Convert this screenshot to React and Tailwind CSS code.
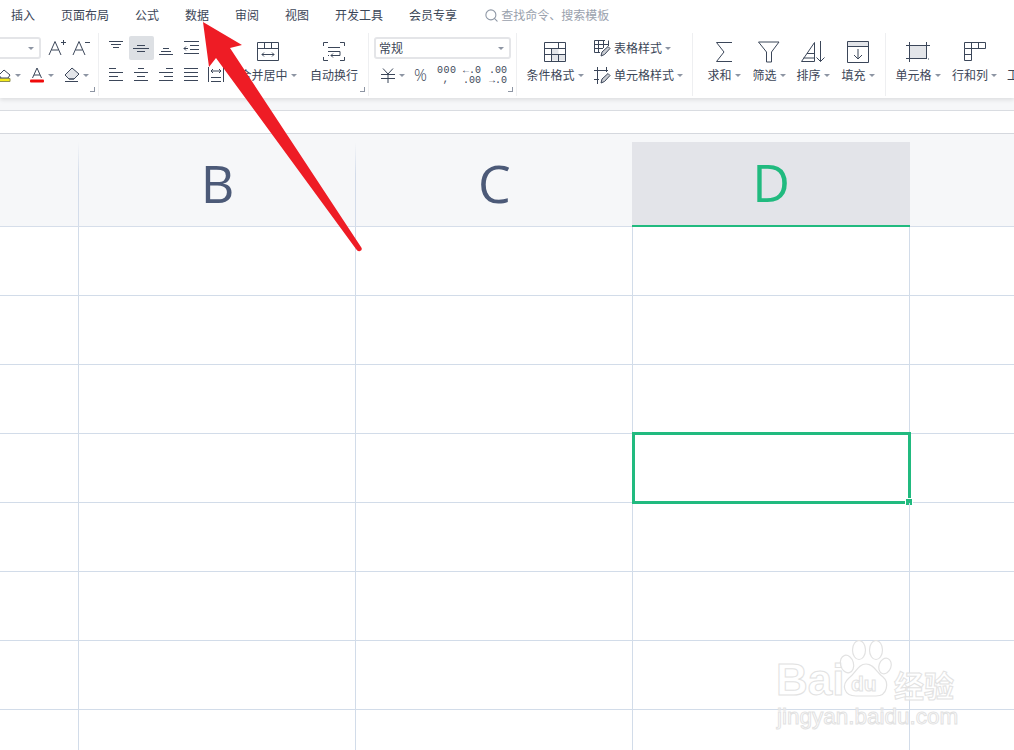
import React from 'react';
import { Search } from 'lucide-react';

const menus = ['插入', '页面布局', '公式', '数据', '审阅', '视图', '开发工具', '会员专享'];

// small dropdown caret used all over the ribbon
function Dd({ className = '' }) {
    return <span className={`inline-block w-0 h-0 shrink-0 border-x-[3px] border-t-[3px] border-x-transparent border-t-[#8d95a3] ${className}`} />;
}

function Ic({ w = 16, h = 20, children }) {
    return (
        <svg width={w} height={h} viewBox={`0 0 ${w} ${h}`} fill="none" stroke="#3b4659" strokeWidth="1" className="shrink-0">
            {children}
        </svg>
    );
}

function Lines({ rows }) {
    return (
        <Ic>
            {rows.map(([a, b, y], i) => (
                <path key={i} d={`M${a} ${y}H${b}`} />
            ))}
        </Ic>
    );
}

function Corner() {
    return <span className="absolute right-[3px] bottom-[4px] w-[5px] h-[5px] border-r border-b border-[#8d95a3]" />;
}

function Cell({ active, children }) {
    return (
        <div className={`w-[25px] h-[24px] flex items-center justify-start pl-[4px] rounded-[2px] ${active ? 'bg-[#dde0e4]' : ''}`}>
            {children}
        </div>
    );
}

function BigBtn({ className, label, icon }) {
    return (
        <div className={`flex flex-col items-center shrink-0 ${className}`}>
            <div className="h-[24px] mt-[7px] flex items-center justify-center">{icon}</div>
            <div className="h-[22px] flex items-center whitespace-nowrap">
                {label.text}
                {label.dd && <Dd className="ml-[3px]" />}
            </div>
        </div>
    );
}

function Group({ className, children }) {
    return <div className={`relative h-[63px] my-[3px] shrink-0 border-r border-[#eeeff1] ${className}`}>{children}</div>;
}

function FontGroup() {
    return (
        <Group className="w-[99px] pt-[4px]">
            <div className="flex items-center h-[22px]">
                <div className="w-[45px] -ml-[4px] h-[22px] border-2 border-[#e4e5e8] rounded-[3px] flex items-center justify-end pr-[5px]">
                    <Dd />
                </div>
                <div className="ml-[7px]">
                    <Ic w={18} h={20}>
                        <path d="M1 17L7 3.5L13 17M3.5 12H10.5" />
                        <path d="M13 4.5H18M15.5 2V7" />
                    </Ic>
                </div>
                <div className="ml-[6px]">
                    <Ic w={18} h={20}>
                        <path d="M1 17L7 3.5L13 17M3.5 12H10.5" />
                        <path d="M13 4.5H18" />
                    </Ic>
                </div>
            </div>
            <div className="flex items-center h-[22px] mt-[5px]">
                <div className="-ml-[2px]">
                    <svg width="14" height="16" viewBox="0 0 14 16" fill="none" stroke="#3b4659" strokeWidth="1">
                        <path d="M1 8L6 3L12 8L10 11H3Z" />
                        <path d="M0 11.5H12V14.5H0Z" fill="#f4ea1a" stroke="#8f8f50" />
                    </svg>
                </div>
                <Dd className="ml-[3px]" />
                <div className="ml-[9px] flex flex-col items-center w-[14px]">
                    <svg width="14" height="16" viewBox="0 0 14 16" fill="none" stroke="#3b4659" strokeWidth="1">
                        <path d="M2.5 11L7 1L11.5 11M4 8H10" />
                        <rect x="0" y="12.5" width="14" height="3" rx="1" fill="#f00a0a" stroke="none" />
                    </svg>
                </div>
                <Dd className="ml-[4px]" />
                <div className="ml-[9px]">
                    <svg width="17" height="16" viewBox="0 0 17 16" fill="none" stroke="#3b4659" strokeWidth="1">
                        <path d="M9 1L16 7L11 12H6L2 8Z" fill="#e3e5e9" />
                        <path d="M2 8L6 12H11" fill="none" />
                        <path d="M2 14.5H15" />
                    </svg>
                </div>
                <Dd className="ml-[3px]" />
            </div>
            <Corner />
        </Group>
    );
}

function AlignGroup() {
    return (
        <Group className="w-[270px] flex">
            <div className="ml-[5px] w-[125px] pt-[3px]">
                <div className="flex">
                    <Cell><Lines rows={[[1, 15, 3.5], [3, 13, 6.5], [5, 11, 9.5]]} /></Cell>
                    <Cell active><Lines rows={[[4, 12, 7.5], [0, 16, 10.5], [4, 12, 13.5]]} /></Cell>
                    <Cell><Lines rows={[[5, 11, 10.5], [3, 13, 13.5], [1, 15, 16.5]]} /></Cell>
                    <Cell>
                        <Ic>
                            <path d="M1 3.5H16M7 7.5H16M7 11.5H16M1 15.5H16" />
                            <path d="M5 10.5H1M3 8.5L1 10.5L3 12.5" />
                        </Ic>
                    </Cell>
                </div>
                <div className="flex mt-[3px]">
                    <Cell><Lines rows={[[1, 8, 3.5], [1, 15, 7.5], [1, 10, 11.5], [1, 15, 15.5]]} /></Cell>
                    <Cell><Lines rows={[[5, 11, 3.5], [1, 15, 7.5], [4, 12, 11.5], [1, 15, 15.5]]} /></Cell>
                    <Cell><Lines rows={[[8, 15, 3.5], [1, 15, 7.5], [6, 15, 11.5], [1, 15, 15.5]]} /></Cell>
                    <Cell><Lines rows={[[1, 15, 3.5], [1, 15, 7.5], [1, 15, 11.5], [1, 15, 15.5]]} /></Cell>
                    <Cell>
                        <Ic>
                            <path d="M0.5 2V17M15.5 2V17M3 12.5H13M3 16.5H13" />
                            <path d="M3 6H13M5 4L3 6L5 8M11 4L13 6L11 8" />
                        </Ic>
                    </Cell>
                </div>
            </div>
            <BigBtn
                className="ml-[4px] w-[70px]"
                label={{ text: '合并居中', dd: true }}
                icon={
                    <Ic w={22} h={20}>
                        <path d="M0.5 0.5H21.5V18.5H0.5ZM0.5 6.5H21.5M7.5 0.5V6.5M14.5 0.5V6.5" />
                        <path d="M5 12.5H17M7 10.5L5 12.5L7 14.5M15 10.5L17 12.5L15 14.5" />
                    </Ic>
                }
            />
            <BigBtn
                className="w-[62px]"
                label={{ text: '自动换行' }}
                icon={
                    <Ic w={22} h={20}>
                        <path d="M5 0.5H0.5V4M17 0.5H21.5V4M5 18.5H0.5V15M17 18.5H21.5V15" />
                        <path d="M5 5.5H17M5 9.5H17V13.5H8M10 11.5L8 13.5L10 15.5M5 13.5H6" />
                    </Ic>
                }
            />
            <Corner />
        </Group>
    );
}

function NumberGroup() {
    return (
        <Group className="w-[148px] pt-[4px] pl-[5px]">
            <div className="w-[137px] h-[22px] border-2 border-[#e4e5e8] rounded-[3px] flex items-center justify-between pl-[3px] pr-[5px] leading-none">
                常规
                <Dd />
            </div>
            <div className="flex items-center h-[22px] mt-[5px] pl-[7px]">
                <Ic w={14} h={16}>
                    <path d="M2 1.5L7 7L12 1.5M0 7.5H14M0 11.5H14M7 7V16" />
                </Ic>
                <Dd className="ml-[4px]" />
                <span className="ml-[9px] w-[15px] text-[16px] leading-none font-light font-['Open_Sans',sans-serif]">%</span>
                <div className="ml-[8px] mt-px w-[18px] text-[10px] leading-[10px] text-center tracking-[0.5px] font-['Liberation_Mono',monospace]">
                    <div>000</div>
                    <div className="-mt-[1px]">,</div>
                </div>
                <div className="ml-[6px] mt-px w-[20px] text-[10px] leading-[10px] text-right font-['Liberation_Mono',monospace]">
                    <div>←.0</div>
                    <div>.00</div>
                </div>
                <div className="ml-[6px] mt-px w-[20px] text-[10px] leading-[10px] text-right font-['Liberation_Mono',monospace]">
                    <div>.00</div>
                    <div>→.0</div>
                </div>
            </div>
            <Corner />
        </Group>
    );
}

function StyleGroup() {
    return (
        <Group className="w-[176px] flex">
            <BigBtn
                className="ml-[9px] w-[58px]"
                label={{ text: '条件格式', dd: true }}
                icon={
                    <Ic w={22} h={20}>
                        <path d="M7.5 6.5H14.5V12.5H21.5V18.5H7.5Z" fill="#e3e5e9" stroke="none" />
                        <path d="M0.5 0.5H21.5V19.5H0.5ZM0.5 6.5H21.5M0.5 12.5H21.5M7.5 6.5V12.5M14.5 0.5V6.5M14.5 12.5V19.5M7.5 12.5V19.5" />
                    </Ic>
                }
            />
            <div className="ml-[10px] pt-[4px]">
                <div className="flex items-center h-[22px] whitespace-nowrap">
                    <Ic w={17} h={17}>
                        <path d="M11 0.5H0.5V12.5H6M0.5 4.5H14.5M0.5 8.5H9M4.5 0.5V12.5M9.5 0.5V8M14.5 0.5V6" />
                        <path d="M7 16L8 12L14 6.5L16 8.5L10.5 14.5Z" fill="#c9ccd2" />
                    </Ic>
                    <span className="ml-[3px]">表格样式</span>
                    <Dd className="ml-[3px]" />
                </div>
                <div className="flex items-center h-[22px] mt-[5px] whitespace-nowrap">
                    <Ic w={17} h={17}>
                        <path d="M0 3.5H14M0 12.5H5M3.5 0V17M12.5 0V5" />
                        <path d="M7 16L8 12L14 6.5L16 8.5L10.5 14.5Z" fill="#c9ccd2" />
                    </Ic>
                    <span className="ml-[3px]">单元格样式</span>
                    <Dd className="ml-[3px]" />
                </div>
            </div>
        </Group>
    );
}

function EditGroup() {
    return (
        <Group className="w-[193px] flex">
            <BigBtn
                className="ml-[15px] w-[32px]"
                label={{ text: '求和', dd: true }}
                icon={
                    <Ic w={18} h={22}>
                        <path d="M17 1.5H1.5L9 11L1.5 20.5H17" />
                    </Ic>
                }
            />
            <BigBtn
                className="ml-[13px] w-[32px]"
                label={{ text: '筛选', dd: true }}
                icon={
                    <Ic w={22} h={22}>
                        <path d="M0.5 1H21L13.5 11V21H8.5V11Z" />
                    </Ic>
                }
            />
            <BigBtn
                className="ml-[12px] w-[32px]"
                label={{ text: '排序', dd: true }}
                icon={
                    <Ic w={24} h={22}>
                        <path d="M0.5 20.5L13.5 1.5V20.5ZM6 12.5H13.5M2.5 17H13.5" />
                        <path d="M19.5 0V20.5M15.5 16.5L19.5 20.5L23.5 16.5" />
                    </Ic>
                }
            />
            <BigBtn
                className="ml-[13px] w-[32px]"
                label={{ text: '填充', dd: true }}
                icon={
                    <Ic w={22} h={22}>
                        <rect x="0.5" y="0.5" width="21" height="5" fill="#e3e5e9" stroke="none" />
                        <path d="M0.5 0.5H21.5V21.5H0.5ZM0.5 5.5H21.5" />
                        <path d="M11 8V18M7 14L11 18L15 14" />
                    </Ic>
                }
            />
        </Group>
    );
}

function CellGroup() {
    return (
        <div className="flex h-[63px] my-[3px] whitespace-nowrap">
            <BigBtn
                className="ml-[10px] w-[44px]"
                label={{ text: '单元格', dd: true }}
                icon={
                    <Ic w={24} h={20}>
                        <rect x="3.5" y="3.5" width="17" height="13" fill="#e3e5e9" />
                        <path d="M0 3.5H24M0 16.5H20M3.5 0V20M20.5 0V14M22 17H23" />
                    </Ic>
                }
            />
            <BigBtn
                className="ml-[11px] w-[47px]"
                label={{ text: '行和列', dd: true }}
                icon={
                    <Ic w={22} h={20}>
                        <path d="M0.5 0.5H21.5V6.5H0.5ZM7.5 0.5V6.5M14.5 0.5V6.5M0.5 6.5V18.5H7.5V6.5M0.5 12.5H7.5" />
                    </Ic>
                }
            />
            <div className="ml-[9px] mt-[31px] h-[22px] flex items-center">工</div>
        </div>
    );
}

function Ribbon() {
    return (
        <div className="relative z-10 bg-white shadow-[0_2px_4px_rgba(0,0,0,0.1)]">
            <div className="h-[30px] flex items-center pl-[11px] gap-[26px]">
                {menus.map((m) => (
                    <span key={m}>{m}</span>
                ))}
                <div className="ml-px flex items-center text-[#9aa1ad]">
                    <Search size={15} strokeWidth={1.75} className="text-[#8f98a6]" />
                    <span className="ml-[2px]">查找命令、搜索模板</span>
                </div>
            </div>
            <div className="h-[68px] flex overflow-hidden">
                <FontGroup />
                <AlignGroup />
                <NumberGroup />
                <StyleGroup />
                <EditGroup />
                <CellGroup />
            </div>
        </div>
    );
}

function Sheet() {
    const fade = "bg-[linear-gradient(to_bottom,#f6f7f9_8px,#d3dcea_40px)] bg-right bg-no-repeat bg-[length:1px_100%]";
    const rows = [0, 1, 2, 3, 4, 5, 6, 7];
    return (
        <div>
            <div className="h-[93px] flex bg-[#f6f7f9] border-b border-[#d6deea] text-[52px] text-[#4c5a78] font-['Open_Sans',sans-serif]">
                <div className={`w-[79px] ${fade}`} />
                <div className={`w-[277px] flex items-center justify-center pt-[5px] leading-none ${fade}`}>B</div>
                <div className={`w-[277px] flex items-center justify-center pt-[5px] leading-none ${fade}`}>C</div>
                <div className="w-[278px] -ml-px mt-[8px] -mb-px flex items-center justify-center pb-[3px] leading-none bg-[#e3e4e9] text-[#21ba7f] border-b-2 border-[#21ba7f]">D</div>
            </div>
            {rows.map((r) => (
                <div key={r} className="h-[69px] flex border-b border-[#d2dce9]">
                    <div className="w-[79px] border-r border-[#d2dce9]" />
                    <div className="w-[277px] border-r border-[#d2dce9]" />
                    <div className="w-[277px] border-r border-[#d2dce9]" />
                    <div className="relative w-[277px] border-r border-[#d2dce9]">
                        {r === 3 && (
                            <>
                                <div className="absolute -left-px -right-[2px] -top-[2px] -bottom-[2px] border-[3px] border-[#21ba7f]" />
                                <div className="absolute -right-[3px] -bottom-[3px] w-[6px] h-[6px] bg-[#21ba7f] outline outline-1 outline-white" />
                            </>
                        )}
                    </div>
                </div>
            ))}
        </div>
    );
}

function Arrow() {
    return (
        <svg className="absolute inset-0 z-20 pointer-events-none" width="1014" height="750" viewBox="0 0 1014 750">
            <path
                d="M203 22L242 45L230 48L361 247Q363 250 360 251Q358 252 356 249L216 58L209 67Z"
                fill="#ee1c25"
            />
        </svg>
    );
}

// faint outlined baidu jingyan stamp in the lower right
function Watermark() {
    const outline = "text-white/70 [-webkit-text-stroke:1px_#e2e2e2]";
    return (
        <div className="absolute left-[770px] top-[640px] w-[200px] h-[95px] z-20 pointer-events-none">
            <span className={`absolute left-[6px] top-[12px] text-[44px] leading-[56px] font-bold font-['Liberation_Sans',sans-serif] ${outline}`}>Bai</span>
            <svg className="absolute left-[68px] top-0" width="56" height="60" viewBox="0 0 56 60" fill="#fff" fillOpacity="0.7" stroke="#e2e2e2" strokeWidth="1.2">
                <ellipse cx="9" cy="24" rx="6.5" ry="9" transform="rotate(-15 9 24)" />
                <ellipse cx="21" cy="10" rx="6.5" ry="9.5" />
                <ellipse cx="38" cy="10" rx="6.5" ry="9.5" />
                <ellipse cx="47" cy="26" rx="6" ry="8" transform="rotate(20 47 26)" />
                <path d="M28 24C36 24 39 33 45 37C51 42 50 56 38 56C32 56 24 56 18 56C6 56 3 45 11 38C18 33 20 24 28 24Z" />
            </svg>
            <span className={`absolute left-[81px] top-[32px] text-[21px] leading-[24px] font-bold font-['Liberation_Sans',sans-serif] ${outline}`}>du</span>
            <span className={`absolute left-[124px] top-[24px] text-[30px] leading-[40px] font-bold font-['Noto_Sans_CJK_SC',sans-serif] ${outline}`}>经验</span>
            <span className={`absolute left-[7px] top-[62px] text-[22.5px] leading-[30px] font-['Liberation_Sans',sans-serif] ${outline}`}>jingyan.baidu.com</span>
        </div>
    );
}

export default function App() {
    return (
        <div className="relative w-[1014px] h-[750px] overflow-hidden bg-white text-[12px] text-[#3c4657] font-['Noto_Sans_CJK_SC','Noto_Sans',sans-serif]">
            <Ribbon />
            <div className="h-[13px] bg-[#f6f7f9] border-b border-[#d9dce1]" />
            <div className="h-[23px] bg-white border-b border-[#d5d8de]" />
            <Sheet />
            <Arrow />
            <Watermark />
        </div>
    );
}
